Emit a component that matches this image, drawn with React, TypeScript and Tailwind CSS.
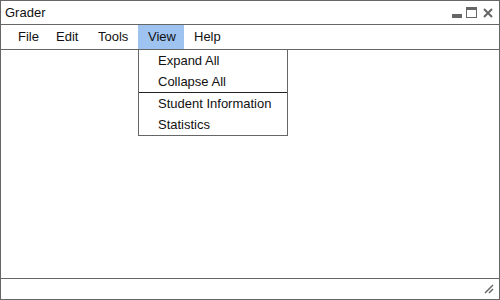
import { useState } from 'react'

const menus = [
  { label: 'File', w: 'w-[38px]' },
  { label: 'Edit', w: 'w-[42px]' },
  { label: 'Tools', w: 'w-[50px]' },
  { label: 'View', w: 'w-[46px]' },
  { label: 'Help', w: 'w-[46px]' },
]

function WindowControls() {
  return (
    <div className="flex items-center gap-[4px] pr-[6px]">
      <svg width="10" height="11" viewBox="0 0 10 11">
        <rect x="0" y="7" width="10" height="4" fill="#666" />
      </svg>
      <svg width="11" height="11" viewBox="0 0 11 11">
        <rect x="0.5" y="0.5" width="10" height="10" fill="none" stroke="#666" />
        <rect x="0" y="0" width="11" height="3" fill="#666" />
      </svg>
      <svg width="10" height="10" viewBox="0 0 10 10" className="ml-[2px]">
        <path d="M1 1 L9 9 M9 1 L1 9" stroke="#666" strokeWidth="2" />
      </svg>
    </div>
  )
}

function App() {
  const [open] = useState('View')

  return (
    <div
      className="relative w-[500px] h-[300px] flex flex-col bg-white border border-[#666] text-[13px] text-[#111]"
      style={{ fontFamily: '"Liberation Sans", Arial, sans-serif' }}
    >
      <div className="h-[24px] flex items-center justify-between border-b border-[#666]">
        <span className="pl-[4px]">Grader</span>
        <WindowControls />
      </div>

      <div className="h-[25px] flex pl-[7px] border-b border-[#666]">
        {menus.map(m => (
          <div
            key={m.label}
            className={`${m.w} h-full flex items-center pl-[10px] ${
              m.label === open ? 'bg-[#9ec3f0]' : ''
            }`}
          >
            {m.label}
          </div>
        ))}
      </div>

      <div className="flex-1" />

      <div className="h-[21px] flex items-center justify-end pr-[5px] border-t border-[#666]">
        <svg width="10" height="10" viewBox="0 0 10 10">
          <path d="M1 9 L9 1 M5 9 L9 5" stroke="#666" strokeWidth="1.5" />
        </svg>
      </div>

      {/* dropdown */}
      <div className="absolute left-[137px] top-[48px] w-[150px] bg-white border border-[#666]">
        <div className="h-[21px] flex items-center pl-[19px]">Expand All</div>
        <div className="h-[21px] flex items-center pl-[19px]">Collapse All</div>
        <div className="h-px bg-[#222]" />
        <div className="h-[21px] flex items-center pl-[19px]">Student Information</div>
        <div className="h-[21px] flex items-center pl-[19px]">Statistics</div>
      </div>
    </div>
  )
}

export default App
